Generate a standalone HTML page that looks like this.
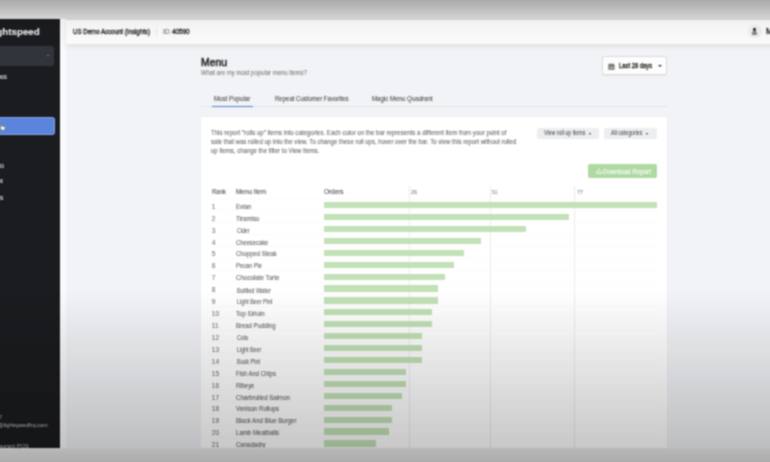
<!DOCTYPE html>
<html><head><meta charset="utf-8">
<style>
*{margin:0;padding:0;box-sizing:border-box}
html,body{width:770px;height:462px;overflow:hidden}
body{position:relative;background:#f2f3f6;font-family:"Liberation Sans",sans-serif;color:#333}
.a{position:absolute}
.t{position:absolute;white-space:nowrap;line-height:1;transform-origin:0 0;-webkit-text-stroke:0.08px currentColor}
#topband{position:absolute;left:-6px;top:-6px;width:782px;height:26px;background:#dedede}
#topvig{position:absolute;left:-6px;top:-6px;width:782px;height:56px;background:linear-gradient(rgba(0,0,0,0.23) 6px,rgba(0,0,0,0.045) 25px,rgba(0,0,0,0.02) 36px,rgba(0,0,0,0) 52px)}
#side{position:absolute;left:-6px;top:19px;width:65.6px;height:428.5px;background:#1b1c1f;overflow:hidden}
#sideinner{position:absolute;left:6px;top:-19px;width:59px;height:462px}
#strip{position:absolute;left:59.6px;top:19px;width:6.6px;height:429px;background:#fafafc}
#hdr{position:absolute;left:66.2px;top:20px;width:712px;height:23.5px;background:#fbfbfb;box-shadow:0 2px 6px rgba(0,0,0,0.09)}
#card{position:absolute;left:201px;top:117px;width:466px;height:331px;background:#fff;box-shadow:0 0 2px rgba(0,0,0,0.05)}
.bar{position:absolute;left:324px;height:6.2px;background:#c2e1b6}
.sep{position:absolute;left:210px;width:448px;height:1px;background:#f9f9f9;opacity:0.6}
.grid{position:absolute;top:186px;width:1px;height:262px;background:#ebebeb}
#bot{position:absolute;left:-6px;top:447.5px;width:782px;height:21px;background:#ebebec}
#vig{position:absolute;left:-6px;top:290px;width:782px;height:178px;background:linear-gradient(rgba(0,0,0,0) 0px,rgba(0,0,0,0.215) 158px,rgba(0,0,0,0.27) 172px,rgba(0,0,0,0.28) 178px)}
.caret{position:absolute;width:0;height:0;border-left:1.6px solid transparent;border-right:1.6px solid transparent;border-top:1.8px solid #333}
#wrap{position:absolute;left:0;top:0;width:770px;height:462px;filter:url(#soft)}
</style></head><body><svg width="0" height="0" style="position:absolute"><filter id="soft" x="-10" y="-10" width="790" height="482" filterUnits="userSpaceOnUse" color-interpolation-filters="sRGB"><feConvolveMatrix order="3" kernelMatrix="1 2 1 2 4 2 1 2 1" divisor="16" edgeMode="duplicate"/></filter></svg><div id="wrap">
<div id="topband"></div>
<div id="side"><div id="sideinner">
  <div class="a" style="left:-10px;top:46px;width:64px;height:19.5px;background:#31343a;border-radius:2px"></div>
  <div class="caret" style="left:46.6px;top:55px;border-top-color:#bbb;border-left-width:1.3px;border-right-width:1.3px;border-top-width:1.5px"></div>
  <div class="a" style="left:-10px;top:117.3px;width:64.8px;height:17.9px;background:#5b85dc;border:1px solid #85a3e6;border-radius:2.5px"></div>
  <svg class="a" style="left:-1px;top:123px" width="8" height="8" viewBox="0 0 8 8"><path d="M1.6 0.8L1.9 4.2L0.9 3.7L0.6 4.6L2.6 7.2H5.6L6.4 4.4L5.9 3.5L3 3.2L2.8 0.8Z" fill="#f4f4f4" stroke="#444" stroke-width="0.5"/></svg>
  <div class="t" style="left:-12.47px;top:27.20px;font-size:9.8px;color:#ececec;font-weight:700;">Lightspeed</div><div class="t" style="left:-27.99px;top:74.22px;font-size:6.0px;color:#cfcfcf;font-weight:700;">LOCATIONS</div><div class="t" style="left:-20.93px;top:164.09px;font-size:5.8px;color:#cfcfcf;font-weight:700;">SETTING</div><div class="t" style="left:-15.17px;top:178.69px;font-size:5.8px;color:#cfcfcf;font-weight:700;">INBOX</div><div class="t" style="left:-24.64px;top:196.09px;font-size:5.8px;color:#cfcfcf;font-weight:700;">REPORTS</div><div class="t" style="left:-37.65px;top:414.56px;font-size:5.6px;color:#a8a8a8;">1-866-932-1777</div><div class="t" style="left:-20.56px;top:422.76px;font-size:5.6px;color:#a8a8a8;">support@lightspeedhq.com</div><div class="t" style="left:-43.22px;top:443.59px;font-size:5.8px;color:#a8a8a8;">Lightspeed Restaurant POS</div>
</div></div>
<div id="strip"></div>
<div id="hdr">
  <div class="a" style="left:90.1px;top:9.4px;width:0.8px;height:5.6px;background:#e3e3e3"></div>
  <div class="a" style="left:682px;top:4.5px;width:13.5px;height:13.5px;border-radius:50%;background:#efefef"></div>
  <div class="a" style="left:687.3px;top:8.4px;width:2.7px;height:2.7px;border-radius:50%;background:#2a2a2a"></div>
  <div class="a" style="left:686.1px;top:11.4px;width:5.1px;height:3.2px;border-radius:2px 2px 0.5px 0.5px;background:#8a8a8a"></div>
</div>
<div class="a" style="left:601.9px;top:56.3px;width:65.6px;height:18.6px;background:#fdfdfd;border:1px solid #dcdcdc;border-radius:2px;box-shadow:0 0.5px 1px rgba(0,0,0,0.06)"></div>
<svg class="a" style="left:607.5px;top:62.5px" width="7" height="7" viewBox="0 0 7 7"><rect x="0.3" y="1.2" width="6.2" height="5.6" rx="0.6" fill="#6a6a6a"/><rect x="1" y="3" width="4.8" height="3.2" fill="#9a9a9a"/><rect x="1.5" y="0.2" width="0.9" height="1.6" fill="#6a6a6a"/><rect x="4.4" y="0.2" width="0.9" height="1.6" fill="#6a6a6a"/></svg>
<div class="caret" style="left:657.8px;top:65.2px;border-left-width:2.1px;border-right-width:2.1px;border-top-width:2.1px"></div>
<div class="a" style="left:201px;top:106px;width:466px;height:1px;background:#e5e6e9"></div>
<div class="a" style="left:212px;top:105.5px;width:40.6px;height:1.4px;background:#5a7dd2"></div>
<div id="card"></div>
<div class="a" style="left:536.9px;top:127.6px;width:62.6px;height:11.5px;background:#eceef1;border-radius:2px"></div>
<div class="caret" style="left:589.4px;top:132.6px;border-top-color:#3a3a3a;border-left-width:1.9px;border-right-width:1.9px;border-top-width:2.0px"></div>
<div class="a" style="left:603.6px;top:127.6px;width:53.7px;height:11.5px;background:#eceef1;border-radius:2px"></div>
<div class="caret" style="left:646.2px;top:132.6px;border-top-color:#3a3a3a;border-left-width:1.9px;border-right-width:1.9px;border-top-width:2.0px"></div>
<div class="a" style="left:588.2px;top:164.2px;width:69.1px;height:14.3px;background:#afd9a3;border-radius:2px"></div>
<svg class="a" style="left:595.5px;top:168px" width="6" height="6" viewBox="0 0 6 6"><path d="M0.5 3.2V5.5H5.5V3.2M3 0.3V4M1.7 2.8L3 4.1L4.3 2.8" fill="none" stroke="#fff" stroke-width="0.75"/></svg>
<div class="sep" style="top:198.5px"></div>
<div class="grid" style="left:409.2px"></div>
<div class="grid" style="left:490px"></div>
<div class="grid" style="left:574px"></div>
<div class="bar" style="top:202.00px;width:333px"></div><div class="sep" style="top:210.30px"></div><div class="bar" style="top:213.92px;width:245px"></div><div class="sep" style="top:222.22px"></div><div class="bar" style="top:225.84px;width:202px"></div><div class="sep" style="top:234.14px"></div><div class="bar" style="top:237.76px;width:157px"></div><div class="sep" style="top:246.06px"></div><div class="bar" style="top:249.68px;width:140px"></div><div class="sep" style="top:257.98px"></div><div class="bar" style="top:261.60px;width:130px"></div><div class="sep" style="top:269.90px"></div><div class="bar" style="top:273.52px;width:121px"></div><div class="sep" style="top:281.82px"></div><div class="bar" style="top:285.44px;width:114px"></div><div class="sep" style="top:293.74px"></div><div class="bar" style="top:297.36px;width:114px"></div><div class="sep" style="top:305.66px"></div><div class="bar" style="top:309.28px;width:108px"></div><div class="sep" style="top:317.58px"></div><div class="bar" style="top:321.20px;width:108px"></div><div class="sep" style="top:329.50px"></div><div class="bar" style="top:333.12px;width:98px"></div><div class="sep" style="top:341.42px"></div><div class="bar" style="top:345.04px;width:98px"></div><div class="sep" style="top:353.34px"></div><div class="bar" style="top:356.96px;width:98px"></div><div class="sep" style="top:365.26px"></div><div class="bar" style="top:368.88px;width:82px"></div><div class="sep" style="top:377.18px"></div><div class="bar" style="top:380.80px;width:82px"></div><div class="sep" style="top:389.10px"></div><div class="bar" style="top:392.72px;width:78px"></div><div class="sep" style="top:401.02px"></div><div class="bar" style="top:404.64px;width:68px"></div><div class="sep" style="top:412.94px"></div><div class="bar" style="top:416.56px;width:68px"></div><div class="sep" style="top:424.86px"></div><div class="bar" style="top:428.48px;width:65px"></div><div class="sep" style="top:436.78px"></div><div class="bar" style="top:440.40px;width:52px"></div><div class="sep" style="top:448.70px"></div>
<div class="t" style="-webkit-text-stroke:0.35px currentColor;left:72.90px;top:28.47px;font-size:7.0px;color:#2a2a2a;transform:scaleX(0.875);">US Demo Account (Insights)</div><div class="t" style="left:162.60px;top:28.47px;font-size:7.0px;color:#666;transform:scaleX(0.894);">ID:</div><div class="t" style="-webkit-text-stroke:0.35px currentColor;left:172.30px;top:28.47px;font-size:7.0px;color:#2a2a2a;transform:scaleX(0.904);">40590</div><div class="t" style="-webkit-text-stroke:0.35px currentColor;left:765.90px;top:27.19px;font-size:8.4px;color:#2a2a2a;">M</div><div class="t" style="-webkit-text-stroke:0.65px currentColor;left:201.00px;top:56.76px;font-size:10.8px;color:#333;transform:scaleX(0.962);">Menu</div><div class="t" style="left:201.00px;top:69.99px;font-size:7.1px;color:#7a7a7a;transform:scaleX(0.842);">What are my most popular menu items?</div><div class="t" style="left:214.00px;top:95.47px;font-size:7.0px;color:#484848;transform:scaleX(0.878);">Most Popular</div><div class="t" style="left:274.50px;top:95.47px;font-size:7.0px;color:#484848;transform:scaleX(0.860);">Repeat Customer Favorites</div><div class="t" style="left:372.40px;top:95.47px;font-size:7.0px;color:#484848;transform:scaleX(0.875);">Magic Menu Quadrant</div><div class="t" style="-webkit-text-stroke:0.35px currentColor;left:619.10px;top:62.24px;font-size:7.4px;color:#2a2a2a;transform:scaleX(0.791);">Last 28 days</div><div class="t" style="left:211.40px;top:130.21px;font-size:6.6px;color:#686868;transform:scaleX(0.925);">This report "rolls up" items into categories. Each color on the bar represents a different item from your point of</div><div class="t" style="left:211.40px;top:139.21px;font-size:6.6px;color:#686868;transform:scaleX(0.917);">sale that was rolled up into the view. To change these roll ups, hover over the bar. To view this report without rolled</div><div class="t" style="left:211.40px;top:148.11px;font-size:6.6px;color:#686868;transform:scaleX(0.915);">up items, change the filter to View Items.</div><div class="t" style="left:544.20px;top:129.87px;font-size:6.3px;color:#555;transform:scaleX(0.839);">View roll up items</div><div class="t" style="left:611.30px;top:129.87px;font-size:6.3px;color:#555;transform:scaleX(0.830);">All categories</div><div class="t" style="left:603.00px;top:168.73px;font-size:6.7px;color:#fff;transform:scaleX(0.927);">Download Report</div><div class="t" style="left:211.80px;top:189.04px;font-size:6.8px;color:#4a4a4a;transform:scaleX(0.882);">Rank</div><div class="t" style="left:235.80px;top:189.04px;font-size:6.8px;color:#4a4a4a;transform:scaleX(0.940);">Menu Item</div><div class="t" style="left:324.20px;top:189.04px;font-size:6.8px;color:#4a4a4a;transform:scaleX(0.938);">Orders</div><div class="t" style="left:411.30px;top:188.55px;font-size:6.2px;color:#808080;transform:scaleX(0.870);">26</div><div class="t" style="left:492.40px;top:188.55px;font-size:6.2px;color:#808080;transform:scaleX(0.783);">51</div><div class="t" style="left:577.30px;top:188.55px;font-size:6.2px;color:#808080;transform:scaleX(0.870);">77</div><div class="t" style="left:211.80px;top:203.81px;font-size:6.6px;color:#777;">1</div><div class="t" style="left:235.80px;top:203.81px;font-size:6.6px;color:#606060;transform:scaleX(0.933);">Evian</div><div class="t" style="left:211.80px;top:215.73px;font-size:6.6px;color:#777;">2</div><div class="t" style="left:235.80px;top:215.73px;font-size:6.6px;color:#606060;transform:scaleX(0.934);">Tiramisu</div><div class="t" style="left:211.80px;top:227.65px;font-size:6.6px;color:#777;">3</div><div class="t" style="left:236.70px;top:227.91px;font-size:6.3px;color:#606060;transform:scaleX(0.830);">Cider</div><div class="t" style="left:211.80px;top:239.57px;font-size:6.6px;color:#777;">4</div><div class="t" style="left:235.80px;top:239.57px;font-size:6.6px;color:#606060;transform:scaleX(0.880);">Cheesecake</div><div class="t" style="left:211.80px;top:251.49px;font-size:6.6px;color:#777;">5</div><div class="t" style="left:235.80px;top:251.49px;font-size:6.6px;color:#606060;transform:scaleX(0.897);">Chopped Steak</div><div class="t" style="left:211.80px;top:263.41px;font-size:6.6px;color:#777;">6</div><div class="t" style="left:235.80px;top:263.41px;font-size:6.6px;color:#606060;transform:scaleX(0.864);">Pecan Pie</div><div class="t" style="left:211.80px;top:275.33px;font-size:6.6px;color:#777;">7</div><div class="t" style="left:235.80px;top:275.33px;font-size:6.6px;color:#606060;transform:scaleX(0.941);">Chocolate Torte</div><div class="t" style="left:211.80px;top:287.25px;font-size:6.6px;color:#777;">8</div><div class="t" style="left:236.70px;top:287.51px;font-size:6.3px;color:#606060;transform:scaleX(0.891);">Bottled Water</div><div class="t" style="left:211.80px;top:299.17px;font-size:6.6px;color:#777;">9</div><div class="t" style="left:236.70px;top:299.43px;font-size:6.3px;color:#606060;transform:scaleX(0.854);">Light Beer Pint</div><div class="t" style="left:211.80px;top:311.09px;font-size:6.6px;color:#777;">10</div><div class="t" style="left:235.80px;top:311.09px;font-size:6.6px;color:#606060;transform:scaleX(0.928);">Top Sirloin</div><div class="t" style="left:211.80px;top:323.01px;font-size:6.6px;color:#777;">11</div><div class="t" style="left:235.80px;top:323.01px;font-size:6.6px;color:#606060;transform:scaleX(0.905);">Bread Pudding</div><div class="t" style="left:211.80px;top:334.93px;font-size:6.6px;color:#777;">12</div><div class="t" style="left:236.50px;top:335.19px;font-size:6.3px;color:#606060;transform:scaleX(0.841);">Cola</div><div class="t" style="left:211.80px;top:346.85px;font-size:6.6px;color:#777;">13</div><div class="t" style="left:236.50px;top:347.11px;font-size:6.3px;color:#606060;transform:scaleX(0.846);">Light Beer</div><div class="t" style="left:211.80px;top:358.77px;font-size:6.6px;color:#777;">14</div><div class="t" style="left:236.50px;top:359.03px;font-size:6.3px;color:#606060;transform:scaleX(0.864);">Bock Pint</div><div class="t" style="left:211.80px;top:370.69px;font-size:6.6px;color:#777;">15</div><div class="t" style="left:235.50px;top:370.69px;font-size:6.6px;color:#606060;transform:scaleX(0.899);">Fish And Chips</div><div class="t" style="left:211.80px;top:382.61px;font-size:6.6px;color:#777;">16</div><div class="t" style="left:235.50px;top:382.61px;font-size:6.6px;color:#606060;transform:scaleX(0.896);">Ribeye</div><div class="t" style="left:211.80px;top:394.53px;font-size:6.6px;color:#777;">17</div><div class="t" style="left:235.50px;top:394.53px;font-size:6.6px;color:#606060;transform:scaleX(0.926);">Charbroiled Salmon</div><div class="t" style="left:211.80px;top:406.45px;font-size:6.6px;color:#777;">18</div><div class="t" style="left:235.50px;top:406.45px;font-size:6.6px;color:#606060;transform:scaleX(0.911);">Venison Rollups</div><div class="t" style="left:211.80px;top:418.37px;font-size:6.6px;color:#777;">19</div><div class="t" style="left:235.50px;top:418.37px;font-size:6.6px;color:#606060;transform:scaleX(0.916);">Black And Blue Burger</div><div class="t" style="left:211.80px;top:430.29px;font-size:6.6px;color:#777;">20</div><div class="t" style="left:235.50px;top:430.29px;font-size:6.6px;color:#606060;transform:scaleX(0.925);">Lamb Meatballs</div><div class="t" style="left:211.80px;top:442.21px;font-size:6.6px;color:#777;">21</div><div class="t" style="left:235.50px;top:442.21px;font-size:6.6px;color:#606060;transform:scaleX(0.917);">Canadadry</div>
<div id="bot"></div>
<div id="vig"></div>
<div id="topvig"></div>
</div></body></html>
